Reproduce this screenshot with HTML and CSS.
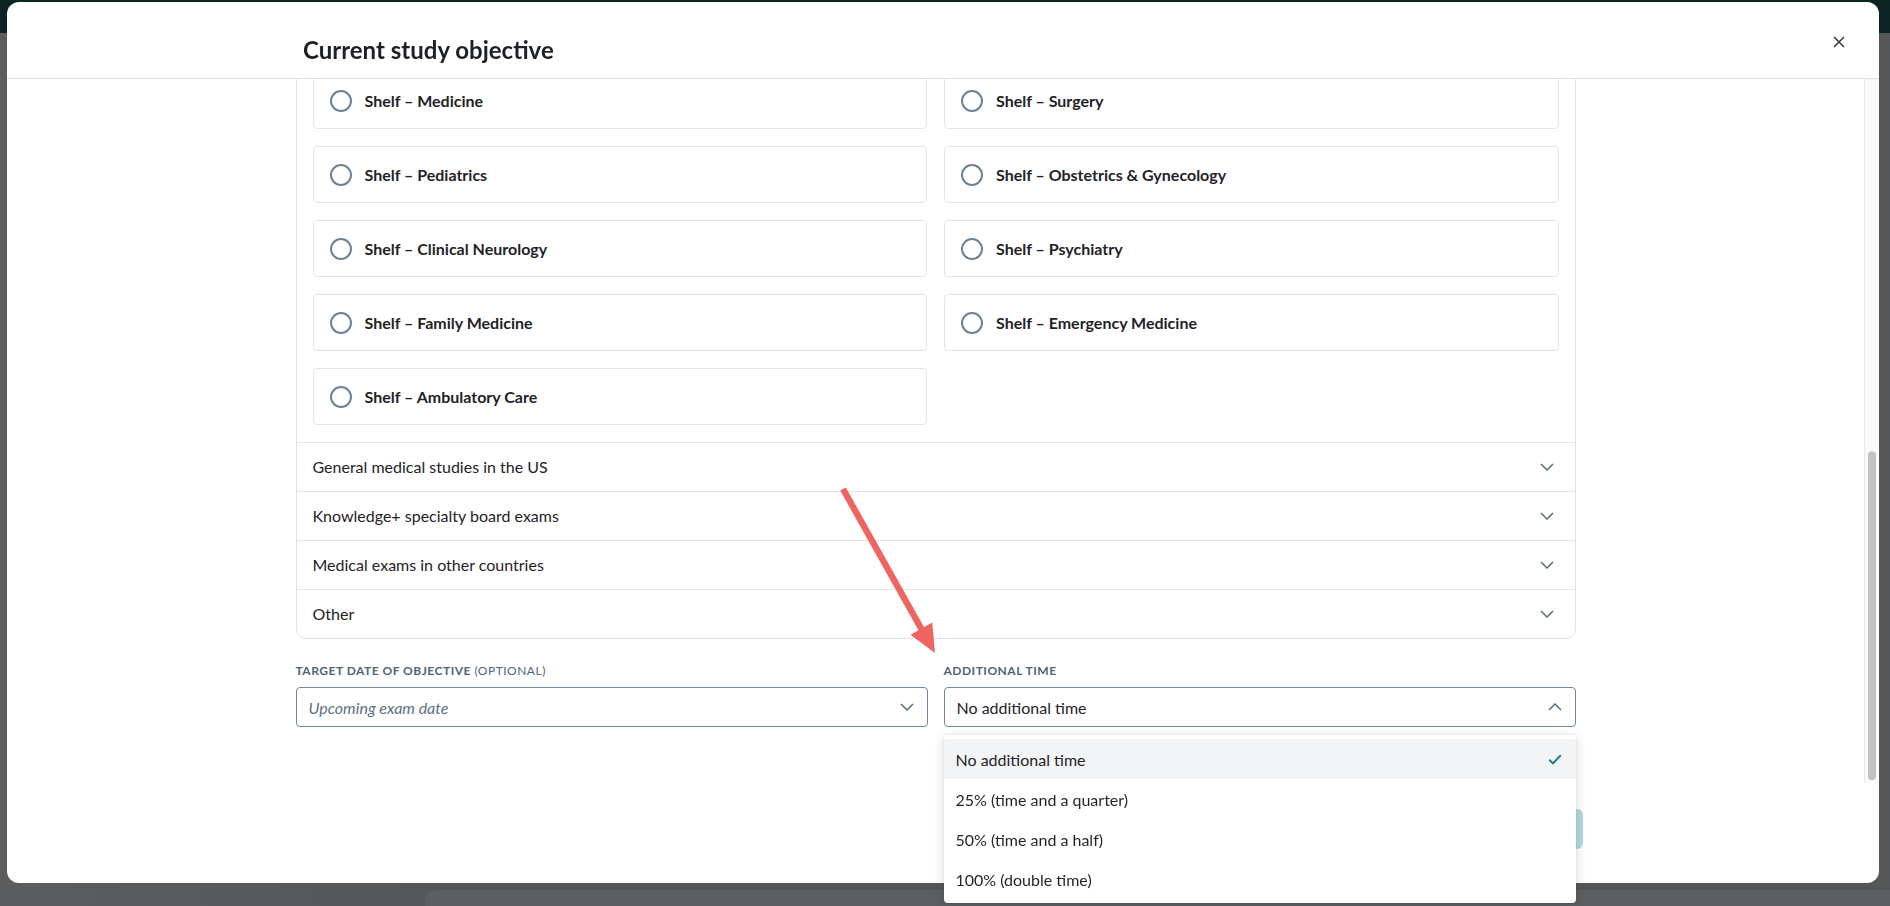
FILE: index.html
```html
<!DOCTYPE html>
<html lang="en">
<head>
  <meta charset="UTF-8" />
  <meta name="viewport" content="width=device-width, initial-scale=1.0"/>
  <title>Current study objective</title>
  <link rel="stylesheet" href="styles.css">
</head>
<body>

  <!-- App behind the modal -->
  <div class="app">
    <div class="app-bar"></div>
    <div class="app-main">
      <div class="app-panel"></div>
    </div>
  </div>

  <!-- Study objective modal -->
  <div class="modal">
    <div class="modal-header">
      <div class="col">
        <h2>Current study objective</h2>
      </div>
      <button class="close-btn" aria-label="Close">
        <svg width="12" height="12" viewBox="0 0 12 12"><path d="M1.5 1.5l9 9M10.5 1.5l-9 9" stroke="#38434e" stroke-width="1.7" stroke-linecap="round"/></svg>
      </button>
    </div>

    <div class="modal-middle">
      <div class="modal-body" id="modalBody">
        <div class="col">
          <p class="intro">Tell us what you're studying for and we'll tailor your questions and study plan to it.</p>
          <div class="field-label">Study objective</div>

          <div class="accordion">
            <div class="acc-row">
              <span>Preclinical medical school courses</span>
              <span class="acc-icon"><svg width="14" height="8" viewBox="0 0 14 8"><path d="M1 1l6 6 6-6" fill="none" stroke="#5d7182" stroke-width="1.6"/></svg></span>
            </div>
            <div class="acc-row">
              <span>COMLEX-USA exams</span>
              <span class="acc-icon"><svg width="14" height="8" viewBox="0 0 14 8"><path d="M1 1l6 6 6-6" fill="none" stroke="#5d7182" stroke-width="1.6"/></svg></span>
            </div>
            <div class="acc-row">
              <span>NBME® self-assessments</span>
              <span class="acc-icon"><svg width="14" height="8" viewBox="0 0 14 8"><path d="M1 1l6 6 6-6" fill="none" stroke="#5d7182" stroke-width="1.6"/></svg></span>
            </div>
            <div class="acc-row">
              <span>Physician assistant exams</span>
              <span class="acc-icon"><svg width="14" height="8" viewBox="0 0 14 8"><path d="M1 1l6 6 6-6" fill="none" stroke="#5d7182" stroke-width="1.6"/></svg></span>
            </div>
            <div class="acc-row">
              <span>Nurse practitioner exams</span>
              <span class="acc-icon"><svg width="14" height="8" viewBox="0 0 14 8"><path d="M1 1l6 6 6-6" fill="none" stroke="#5d7182" stroke-width="1.6"/></svg></span>
            </div>
            <div class="acc-row">
              <span>Nursing exams</span>
              <span class="acc-icon"><svg width="14" height="8" viewBox="0 0 14 8"><path d="M1 1l6 6 6-6" fill="none" stroke="#5d7182" stroke-width="1.6"/></svg></span>
            </div>
            <div class="acc-row">
              <span>Pharmacy exams</span>
              <span class="acc-icon"><svg width="14" height="8" viewBox="0 0 14 8"><path d="M1 1l6 6 6-6" fill="none" stroke="#5d7182" stroke-width="1.6"/></svg></span>
            </div>
            <div class="acc-row">
              <span>Residency in-training exams</span>
              <span class="acc-icon"><svg width="14" height="8" viewBox="0 0 14 8"><path d="M1 1l6 6 6-6" fill="none" stroke="#5d7182" stroke-width="1.6"/></svg></span>
            </div>
            <div class="acc-row">
              <span>USMLE® and clerkship shelf exams</span>
              <span class="acc-icon"><svg width="14" height="8" viewBox="0 0 14 8"><path d="M1 7l6-6 6 6" fill="none" stroke="#5d7182" stroke-width="1.6"/></svg></span>
            </div>
            <div class="acc-panel">
              <div class="option-grid">
                <label class="option"><span class="radio"></span>USMLE® Step 1</label>
                <label class="option"><span class="radio"></span>USMLE® Step 2 CK</label>
                <label class="option"><span class="radio"></span>USMLE® Step 3</label>
                <label class="option"><span class="radio"></span>NBME® CBSE</label>
                <label class="option"><span class="radio"></span>NBME® CCSE</label>
                <label class="option"><span class="radio"></span>Shelf – All clerkships</label>
                <label class="option"><span class="radio"></span>Shelf – Medicine</label>
                <label class="option"><span class="radio"></span>Shelf – Surgery</label>
                <label class="option"><span class="radio"></span>Shelf – Pediatrics</label>
                <label class="option"><span class="radio"></span>Shelf – Obstetrics &amp; Gynecology</label>
                <label class="option"><span class="radio"></span>Shelf – Clinical Neurology</label>
                <label class="option"><span class="radio"></span>Shelf – Psychiatry</label>
                <label class="option"><span class="radio"></span>Shelf – Family Medicine</label>
                <label class="option"><span class="radio"></span>Shelf – Emergency Medicine</label>
                <label class="option"><span class="radio"></span>Shelf – Ambulatory Care</label>
              </div>
            </div>
            <div class="acc-row">
              <span>General medical studies in the US</span>
              <span class="acc-icon"><svg width="14" height="8" viewBox="0 0 14 8"><path d="M1 1l6 6 6-6" fill="none" stroke="#5d7182" stroke-width="1.6"/></svg></span>
            </div>
            <div class="acc-row">
              <span>Knowledge+ specialty board exams</span>
              <span class="acc-icon"><svg width="14" height="8" viewBox="0 0 14 8"><path d="M1 1l6 6 6-6" fill="none" stroke="#5d7182" stroke-width="1.6"/></svg></span>
            </div>
            <div class="acc-row">
              <span>Medical exams in other countries</span>
              <span class="acc-icon"><svg width="14" height="8" viewBox="0 0 14 8"><path d="M1 1l6 6 6-6" fill="none" stroke="#5d7182" stroke-width="1.6"/></svg></span>
            </div>
            <div class="acc-row">
              <span>Other</span>
              <span class="acc-icon"><svg width="14" height="8" viewBox="0 0 14 8"><path d="M1 1l6 6 6-6" fill="none" stroke="#5d7182" stroke-width="1.6"/></svg></span>
            </div>
          </div>

          <div class="fields">
            <div class="field">
              <div class="field-label">Target date of objective <span class="optional">(optional)</span></div>
              <div class="select">
                <span class="placeholder">Upcoming exam date</span>
                <span class="acc-icon"><svg width="14" height="8" viewBox="0 0 14 8"><path d="M1 1l6 6 6-6" fill="none" stroke="#5d7182" stroke-width="1.6"/></svg></span>
              </div>
            </div>
            <div class="field">
              <div class="field-label">Additional time</div>
              <div class="select" id="timeSelect">
                <span>No additional time</span>
                <span class="acc-icon"><svg width="14" height="8" viewBox="0 0 14 8"><path d="M1 7l6-6 6 6" fill="none" stroke="#5d7182" stroke-width="1.6"/></svg></span>
              </div>
            </div>
          </div>
        </div>
      </div>
      <div class="scroll-track"><div class="scroll-thumb" id="scrollThumb"></div></div>
    </div>

    <div class="modal-footer">
      <div class="col footer-actions">
        <button class="btn-secondary">Cancel</button>
        <button class="btn-primary" disabled>Save objective</button>
      </div>
    </div>
  </div>

  <!-- Options for the additional time select -->
  <ul class="menu" id="timeMenu">
    <li class="selected">No additional time
      <svg width="14" height="11" viewBox="0 0 14 11"><path d="M1.2 5.8l3.8 3.6 7.8-8.2" fill="none" stroke="#137b80" stroke-width="1.9"/></svg>
    </li>
    <li>25% (time and a quarter)</li>
    <li>50% (time and a half)</li>
    <li>100% (double time)</li>
  </ul>

  <!-- Red pointer -->
  <svg class="pointer" width="1890" height="906" viewBox="0 0 1890 906">
    <line x1="843" y1="489" x2="922" y2="630" stroke="#ee6461" stroke-width="6.5"/>
    <polygon points="935,653 910.5,634.8 932.2,622.5" fill="#ee6461"/>
  </svg>

  <script>
    const body = document.getElementById('modalBody');
    const track = document.querySelector('.scroll-track');
    const thumb = document.getElementById('scrollThumb');
    const menu = document.getElementById('timeMenu');

    function syncThumb() {
      const room = track.clientHeight - 6;
      const h = room * body.clientHeight / body.scrollHeight;
      const max = body.scrollHeight - body.clientHeight;
      thumb.style.height = h + 'px';
      thumb.style.transform = `translateY(${max ? (room - h) * body.scrollTop / max : 0}px)`;
    }

    function placeMenu() {
      const r = document.getElementById('timeSelect').getBoundingClientRect();
      menu.style.top = (r.bottom + 8) + 'px';
      menu.style.left = r.left + 'px';
      menu.style.width = r.width + 'px';
    }

    body.addEventListener('scroll', () => { syncThumb(); placeMenu(); });

    // open at the bottom of the list, where the date / time fields are
    body.scrollTop = body.scrollHeight;
    syncThumb();
    placeMenu();
  </script>
</body>
</html>
```

FILE: styles.css
```css
* {
  box-sizing: border-box;
}

body {
  margin: 0;
  height: 100vh;
  overflow: hidden;
  font-family: 'Lato', 'Noto Sans', sans-serif;
  color: #1f2326;
  background: #555759;
}

/* dimmed app underneath */
.app-bar {
  height: 33px;
  background: #0c2422;
}

.app-main {
  height: calc(100vh - 33px);
  padding: 857px 0 0 425px;
  background: linear-gradient(to right, #5c5d5f, #535557 25%, #555658);
}

.app-panel {
  height: 40px;
  background: #5d5e60;
  border-radius: 10px 0 0 0;
}

/* modal */
.modal {
  position: fixed;
  top: 2px;
  left: 7px;
  right: 11px;
  bottom: 23px;
  background: #fff;
  border-radius: 12px;
  display: flex;
  flex-direction: column;
}

.col {
  max-width: 1280px;
  margin: 0 auto;
}

.modal-header {
  position: relative;
  padding: 33px 0 13px;
  border-bottom: 1px solid #dde3e8;
}

.modal-header h2 {
  margin: 0;
  font-size: 24px;
  line-height: 30px;
  font-weight: 700;
  color: #1d2125;
}

.close-btn {
  position: absolute;
  top: 30px;
  right: 30px;
  width: 20px;
  height: 20px;
  padding: 0;
  border: none;
  background: none;
  display: flex;
  align-items: center;
  justify-content: center;
  cursor: pointer;
}

.modal-middle {
  flex: 1;
  min-height: 0;
  display: flex;
}

.modal-body {
  flex: 1;
  overflow-y: auto;
  scrollbar-width: none;
  padding: 32px 0 56px;
}

.modal-body::-webkit-scrollbar {
  display: none;
}

.scroll-track {
  width: 15px;
  padding: 3px;
  background: #fafafa;
  border-left: 1px solid #e9e9e9;
}

.scroll-thumb {
  width: 8px;
  background: #c2c2c2;
  border-radius: 4px;
}

.intro {
  margin: 0 0 24px;
  font-size: 16px;
  line-height: 24px;
}

.field-label {
  font-size: 12px;
  line-height: 16px;
  font-weight: 700;
  letter-spacing: 0.5px;
  text-transform: uppercase;
  color: #4f6477;
  margin-bottom: 8px;
}

.field-label .optional {
  font-weight: 400;
}

/* objective accordion */
.accordion {
  border: 1px solid #dfe4e8;
  border-radius: 10px;
  overflow: hidden;
}

.acc-row {
  height: 49px;
  padding: 0 16px;
  border-top: 1px solid #e2e6ea;
  display: flex;
  align-items: center;
  justify-content: space-between;
  font-size: 16px;
  line-height: 20px;
  color: #1f2326;
}

.acc-row:first-child {
  border-top: none;
  height: 48px;
}

.acc-row > span:first-child {
  margin-top: -1px;
}

.acc-icon {
  width: 24px;
  height: 24px;
  display: flex;
  align-items: center;
  justify-content: center;
}

.acc-panel {
  padding: 17px 16px 17px;
}

.option-grid {
  display: grid;
  grid-template-columns: 1fr 1fr;
  gap: 17px;
}

.option {
  height: 57px;
  padding: 0 16px;
  border: 1px solid #e1e5e9;
  border-radius: 4px;
  display: flex;
  align-items: center;
  gap: 13px;
  font-size: 16px;
  font-weight: 700;
  color: #1f2326;
  cursor: pointer;
}

.radio {
  width: 22px;
  height: 22px;
  border: 2px solid #6e8294;
  border-radius: 50%;
  flex-shrink: 0;
}

/* date + additional time */
.fields {
  margin-top: 24px;
  display: grid;
  grid-template-columns: 1fr 1fr;
  gap: 16px;
}

.select {
  height: 40px;
  padding: 0 8px 0 12px;
  border: 1px solid #72889a;
  border-radius: 4px;
  display: flex;
  align-items: center;
  justify-content: space-between;
  font-size: 16px;
  color: #1f2326;
}

.placeholder {
  font-style: italic;
  color: #5b7083;
}

.modal-footer {
  height: 100px;
  padding-top: 26px;
}

.footer-actions {
  display: flex;
  justify-content: flex-end;
  gap: 12px;
}

.btn-primary, .btn-secondary {
  height: 40px;
  padding: 0 24px;
  border-radius: 6px;
  font-family: inherit;
  font-size: 16px;
  font-weight: 700;
}

.btn-primary {
  background: #b1d9dc;
  color: #fff;
  border: none;
}

.btn-secondary {
  background: #fff;
  color: #137b80;
  border: 1px solid #137b80;
}

/* select menu */
.menu {
  position: fixed;
  margin: 0;
  padding: 4px 0;
  list-style: none;
  background: #fff;
  border-radius: 4px;
  box-shadow: 0 2px 12px rgba(20, 30, 40, 0.16), 0 0 0 1px rgba(20, 30, 40, 0.03);
  z-index: 10;
}

.menu li {
  height: 40px;
  padding: 0 14px 0 12px;
  display: flex;
  align-items: center;
  justify-content: space-between;
  font-size: 16px;
  color: #1f2326;
}

.menu li.selected {
  background: #f3f4f6;
}

.pointer {
  position: fixed;
  top: 0;
  left: 0;
  pointer-events: none;
  z-index: 20;
}
```
